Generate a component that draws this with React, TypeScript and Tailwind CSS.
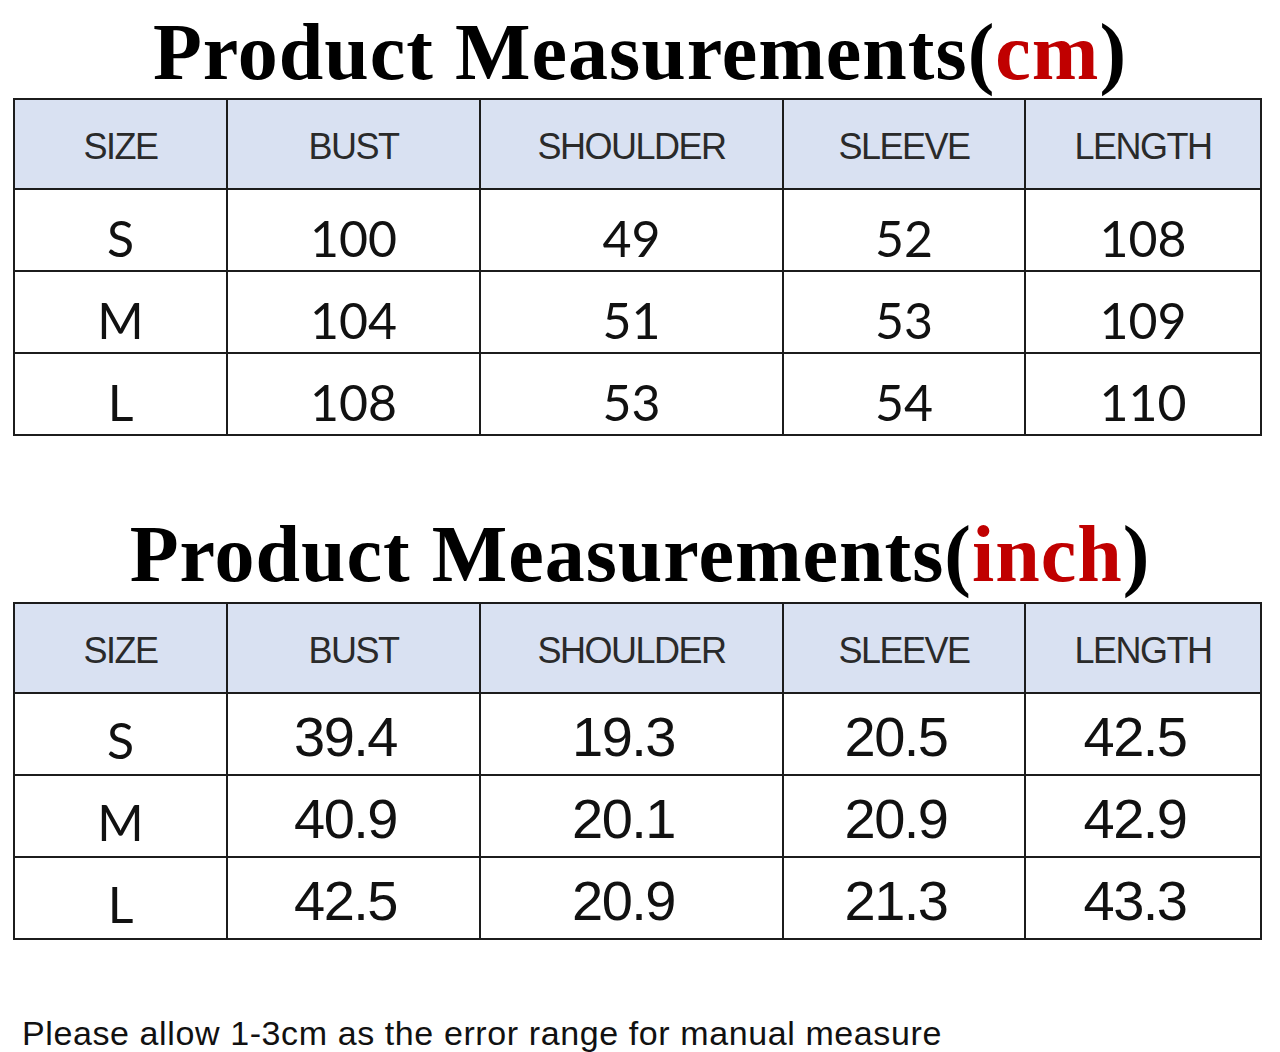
const headers = ["SIZE", "BUST", "SHOULDER", "SLEEVE", "LENGTH"];

const cmRows = [
  ["S", "100", "49", "52", "108"],
  ["M", "104", "51", "53", "109"],
  ["L", "108", "53", "54", "110"],
];

const inchRows = [
  ["S", "39.4", "19.3", "20.5", "42.5"],
  ["M", "40.9", "20.1", "20.9", "42.9"],
  ["L", "42.5", "20.9", "21.3", "43.3"],
];

const cols = "grid grid-cols-[211px_253px_303px_242px_236px]";

function Title({ unit }: { unit: string }) {
  return (
    <h1 className="text-center font-['Liberation_Serif',serif] text-[80px] font-bold leading-none tracking-[1px] text-black">
      Product Measurements(<span className="text-[#c00000]">{unit}</span>)
    </h1>
  );
}

function SizeTable({ rows, inch }: { rows: string[][]; inch?: boolean }) {
  return (
    <div className="ml-[13px] w-[1249px] border-2 border-[#1c1c1c]">
      <div className={`${cols} h-[88px] bg-[#d9e1f2]`}>
        {headers.map((h, i) => (
          <div
            key={h}
            className={`flex items-start justify-center pt-[29px] font-['Liberation_Sans',sans-serif] text-[36px] leading-none tracking-[-1.5px] text-[#2a2a2a] ${i > 0 ? "border-l-2 border-[#1c1c1c]" : ""}`}
          >
            {h}
          </div>
        ))}
      </div>
      {rows.map((row) => (
        <div key={row[0]} className={`${cols} h-[82px] border-t-2 border-[#1c1c1c]`}>
          {row.map((v, i) => {
            let font = "pt-[23px] font-['Lato',sans-serif] text-[50px]";
            if (inch && i > 0) {
              font = "pr-[16px] pt-[15px] font-['Liberation_Sans',sans-serif] text-[56px] tracking-[-1.5px]";
            } else if (inch) {
              font = "pt-[21px] font-['Lato',sans-serif] text-[50px]";
            }
            return (
              <div
                key={i}
                className={`flex items-start justify-center leading-none text-[#111] ${i > 0 ? "border-l-2 border-[#1c1c1c]" : ""} ${font}`}
              >
                {v}
              </div>
            );
          })}
        </div>
      ))}
    </div>
  );
}

export default function App() {
  return (
    <div className="h-[1052px] w-[1280px] overflow-hidden bg-white">
      <div className="h-[98px] pt-[12px]">
        <Title unit="cm" />
      </div>
      <SizeTable rows={cmRows} />
      <div className="h-[166px] pt-[78px]">
        <Title unit="inch" />
      </div>
      <SizeTable rows={inchRows} inch />
      <p className="ml-[22px] mt-[76px] font-['Liberation_Sans',sans-serif] text-[34px] leading-none tracking-[0.6px] text-[#111]">
        Please allow 1-3cm as the error range for manual measure
      </p>
    </div>
  );
}
